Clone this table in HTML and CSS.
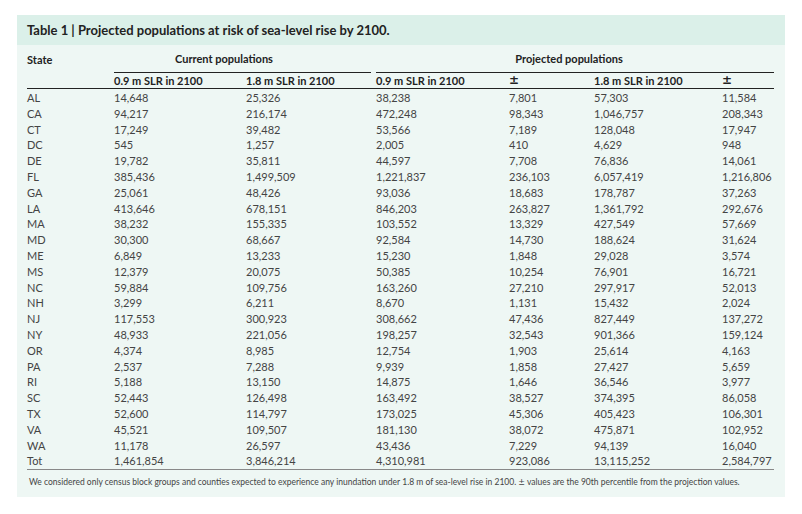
FILE: index.html
```html
<!DOCTYPE html>
<html>
<head>
<meta charset="utf-8">
<link rel="stylesheet" href="styles.css">
</head>
<body>
<div class="panel">
  <div class="title"><b>Table 1 | </b>Projected populations at risk of sea-level rise by 2100.</div>
  <div class="content">
    <table class="tbl">
      <colgroup>
        <col class="c0"><col class="c1"><col class="c2"><col class="c3"><col class="c4"><col class="c5"><col class="c6">
      </colgroup>
      <thead>
        <tr class="h1">
          <th class="state">State</th>
          <th colspan="2" class="group"><div class="grp grp-cur">Current populations</div></th>
          <th colspan="4" class="group"><div class="grp grp-proj">Projected populations</div></th>
        </tr>
        <tr class="h2">
          <th></th>
          <th>0.9 m SLR in 2100</th>
          <th>1.8 m SLR in 2100</th>
          <th>0.9 m SLR in 2100</th>
          <th><span class="pm">±</span></th>
          <th>1.8 m SLR in 2100</th>
          <th><span class="pm">±</span></th>
        </tr>
      </thead>
      <tbody>
        <tr><td>AL</td><td>14,648</td><td>25,326</td><td>38,238</td><td>7,801</td><td>57,303</td><td>11,584</td></tr>
        <tr><td>CA</td><td>94,217</td><td>216,174</td><td>472,248</td><td>98,343</td><td>1,046,757</td><td>208,343</td></tr>
        <tr><td>CT</td><td>17,249</td><td>39,482</td><td>53,566</td><td>7,189</td><td>128,048</td><td>17,947</td></tr>
        <tr><td>DC</td><td>545</td><td>1,257</td><td>2,005</td><td>410</td><td>4,629</td><td>948</td></tr>
        <tr><td>DE</td><td>19,782</td><td>35,811</td><td>44,597</td><td>7,708</td><td>76,836</td><td>14,061</td></tr>
        <tr><td>FL</td><td>385,436</td><td>1,499,509</td><td>1,221,837</td><td>236,103</td><td>6,057,419</td><td>1,216,806</td></tr>
        <tr><td>GA</td><td>25,061</td><td>48,426</td><td>93,036</td><td>18,683</td><td>178,787</td><td>37,263</td></tr>
        <tr><td>LA</td><td>413,646</td><td>678,151</td><td>846,203</td><td>263,827</td><td>1,361,792</td><td>292,676</td></tr>
        <tr><td>MA</td><td>38,232</td><td>155,335</td><td>103,552</td><td>13,329</td><td>427,549</td><td>57,669</td></tr>
        <tr><td>MD</td><td>30,300</td><td>68,667</td><td>92,584</td><td>14,730</td><td>188,624</td><td>31,624</td></tr>
        <tr><td>ME</td><td>6,849</td><td>13,233</td><td>15,230</td><td>1,848</td><td>29,028</td><td>3,574</td></tr>
        <tr><td>MS</td><td>12,379</td><td>20,075</td><td>50,385</td><td>10,254</td><td>76,901</td><td>16,721</td></tr>
        <tr><td>NC</td><td>59,884</td><td>109,756</td><td>163,260</td><td>27,210</td><td>297,917</td><td>52,013</td></tr>
        <tr><td>NH</td><td>3,299</td><td>6,211</td><td>8,670</td><td>1,131</td><td>15,432</td><td>2,024</td></tr>
        <tr><td>NJ</td><td>117,553</td><td>300,923</td><td>308,662</td><td>47,436</td><td>827,449</td><td>137,272</td></tr>
        <tr><td>NY</td><td>48,933</td><td>221,056</td><td>198,257</td><td>32,543</td><td>901,366</td><td>159,124</td></tr>
        <tr><td>OR</td><td>4,374</td><td>8,985</td><td>12,754</td><td>1,903</td><td>25,614</td><td>4,163</td></tr>
        <tr><td>PA</td><td>2,537</td><td>7,288</td><td>9,939</td><td>1,858</td><td>27,427</td><td>5,659</td></tr>
        <tr><td>RI</td><td>5,188</td><td>13,150</td><td>14,875</td><td>1,646</td><td>36,546</td><td>3,977</td></tr>
        <tr><td>SC</td><td>52,443</td><td>126,498</td><td>163,492</td><td>38,527</td><td>374,395</td><td>86,058</td></tr>
        <tr><td>TX</td><td>52,600</td><td>114,797</td><td>173,025</td><td>45,306</td><td>405,423</td><td>106,301</td></tr>
        <tr><td>VA</td><td>45,521</td><td>109,507</td><td>181,130</td><td>38,072</td><td>475,871</td><td>102,952</td></tr>
        <tr><td>WA</td><td>11,178</td><td>26,597</td><td>43,436</td><td>7,229</td><td>94,139</td><td>16,040</td></tr>
        <tr class="total"><td>Tot</td><td>1,461,854</td><td>3,846,214</td><td>4,310,981</td><td>923,086</td><td>13,115,252</td><td>2,584,797</td></tr>
      </tbody>
    </table>
    <p class="note">We considered only census block groups and counties expected to experience any inundation under 1.8 m of sea-level rise in 2100. <span class="pmn">±</span> values are the 90th percentile from the projection values.</p>
  </div>
</div>
</body>
</html>
```
FILE: styles.css
```css
html, body {
  margin: 0;
  padding: 0;
  background: #ffffff;
}
body {
  padding: 15px 0 0 17px;
  font-family: Lato, "Open Sans", sans-serif;
}
.panel {
  width: 768px;
  height: 482px;
  background: #eef7f4;
  display: flex;
  flex-direction: column;
}
.title {
  height: 30px;
  background: #dbf0e9;
  padding-left: 10px;
  display: flex;
  align-items: center;
  font-size: 13px;
  font-weight: 700;
  color: #222;
}
.title b {
  font-weight: 700;
  white-space: pre;
}
.content {
  padding: 0 11px 0 10px;
}
.tbl {
  width: 747px;
  border-collapse: collapse;
  table-layout: fixed;
  font-size: 11px;
  color: #444;
}
.c0 { width: 87px; }
.c1 { width: 132px; }
.c2 { width: 130px; }
.c3 { width: 133px; }
.c4 { width: 85px; }
.c5 { width: 128px; }
.c6 { width: 52px; }
.tbl th {
  text-align: left;
  font-weight: 700;
  color: #222;
  padding: 0;
}
.tbl td {
  padding: 0;
  height: 15.8px;
  line-height: 15.8px;
  white-space: nowrap;
}
.h1 th {
  height: 28px;
  vertical-align: middle;
  padding: 0;
}
.h1 .group {
  text-align: center;
  vertical-align: top;
}
.grp {
  height: 27px;
  line-height: 28px;
  border-bottom: 1px solid #222;
}
.grp-cur {
  margin-right: 5px;
  padding-right: 37px;
}
.grp-proj {
  padding-right: 12px;
}
.h2 th {
  height: 13px;
  line-height: 13px;
  padding-top: 0;
  padding-bottom: 1px;
  border-bottom: 1px solid #222;
  font-size: 11px;
}
.pm {
  font-family: "DejaVu Sans", sans-serif;
  font-size: 12px;
  font-weight: 700;
  line-height: 13px;
}
.pmn {
  font-family: "DejaVu Sans", sans-serif;
  font-size: 8px;
}
.tbl tbody tr:first-child td {
  padding-top: 1px;
}
.total td {
  border-bottom: 1px solid #888;
}
.note {
  margin: 7px 0 0 2px;
  font-size: 8.5px;
  color: #444;
  white-space: nowrap;
}
```
